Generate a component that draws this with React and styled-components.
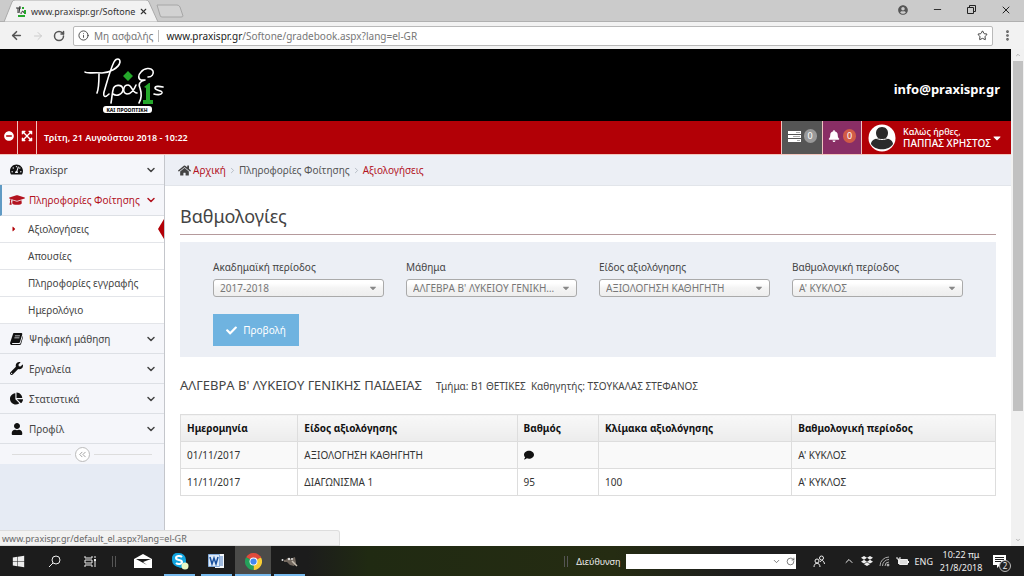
import React, { useState } from "react";
import styled, { createGlobalStyle, css } from "styled-components";
import {
  ArrowLeft,
  ArrowRight,
  ChevronDown,
  ChevronUp,
  ChevronsLeft,
  ChevronRight,
  EllipsisVertical,
  Info,
  Minus,
  RotateCw,
  Star,
  X,
} from "lucide-react";
import {
  FaBell,
  FaCaretDown,
  FaCaretRight,
  FaChartPie,
  FaCheck,
  FaComment,
  FaDropbox,
  FaExpandArrowsAlt,
  FaGraduationCap,
  FaHome,
  FaMinusCircle,
  FaTachometerAlt,
  FaUser,
  FaUserCircle,
  FaWindows,
  FaWrench,
} from "react-icons/fa";

const colors = {
  red: "#b20006",
  link: "#b3131f",
  panel: "#eceff5",
  line: "#dde0e5",
  text: "#444",
};

const GlobalStyle = createGlobalStyle`
  * {
    box-sizing: border-box;
  }
  body {
    margin: 0;
    background: #fff;
    color: ${colors.text};
    font-family: "Noto Sans", "Open Sans", sans-serif;
    font-size: 10px;
  }
  button, select, input {
    font-family: inherit;
  }
  a {
    color: inherit;
    text-decoration: none;
  }
  svg {
    display: block;
    flex: none;
  }
`;

const flexCenter = css`
  display: flex;
  align-items: center;
`;

const plainButton = css`
  ${flexCenter};
  justify-content: center;
  padding: 0;
  border: 0;
  background: none;
  color: inherit;
`;

const Screen = styled.div`
  display: flex;
  flex-direction: column;
  height: 100vh;
  overflow: hidden;
`;

/* browser window */

const TabStrip = styled.div`
  display: flex;
  flex: none;
  justify-content: space-between;
  height: 22px;
  background: #cbcbcb;
  border-bottom: 1px solid #b0b0b0;
`;

const TabList = styled.div`
  display: flex;
  padding-left: 4px;
`;

const Tab = styled.div`
  ${flexCenter};
  position: relative;
  z-index: 1;
  width: 155px;
  height: 22px;
  padding: 0 12px 0 11px;
  gap: 4px;
  color: #333;
  font-size: 9px;
`;

const TabShape = styled.svg`
  position: absolute;
  inset: 0;
  z-index: -1;
`;

const TabTitle = styled.span`
  flex: 1;
  white-space: nowrap;
`;

const IconButton = styled.button`
  ${plainButton};
`;

const WindowButtons = styled.div`
  ${flexCenter};
  gap: 24px;
  padding: 0 12px 2px 0;
  color: #222;
`;

const Toolbar = styled.div`
  ${flexCenter};
  flex: none;
  gap: 9px;
  height: 27px;
  padding: 0 10px;
  background: #f2f2f2;
  color: #555;
`;

const AddressBar = styled.div`
  ${flexCenter};
  flex: 1;
  height: 20px;
  margin: 0 -1px;
  padding: 0 4px;
  gap: 5px;
  border: 1px solid #b9b9b9;
  border-radius: 2px;
  background: #fff;
  color: #777;
  font-size: 10px;
`;

const Url = styled.span`
  flex: 1;
  padding-left: 7px;
  border-left: 1px solid #bbb;
  line-height: 12px;

  b {
    color: #222;
    font-weight: 400;
  }
`;

const Viewport = styled.div`
  display: flex;
  flex: 1;
  min-height: 0;
  position: relative;
`;

const Page = styled.div`
  display: flex;
  flex: 1;
  flex-direction: column;
  min-width: 0;
`;

const ScrollTrack = styled.div`
  display: flex;
  flex-direction: column;
  align-items: center;
  width: 13px;
  padding: 3px 1px;
  gap: 3px;
  background: #f1f1f1;
  color: #777;
`;

const ScrollThumb = styled.div`
  width: 10px;
  height: 350px;
  background: #c1c1c1;
`;

const ScrollSpace = styled.div`
  flex: 1;
`;

const StatusBubble = styled.div`
  position: absolute;
  bottom: 0;
  left: 0;
  width: 340px;
  height: 16px;
  padding-left: 2px;
  border: 1px solid #ddd;
  border-left: 0;
  border-radius: 0 3px 0 0;
  background: #f2f2f2;
  color: #666;
  font-size: 9px;
  line-height: 15px;
`;

/* site header */

const Header = styled.header`
  ${flexCenter};
  flex: none;
  justify-content: space-between;
  height: 72px;
  padding: 0 11px 0 84px;
  background: #000;
`;

const Email = styled.a`
  padding-top: 8px;
  color: #fff;
  font-size: 13px;
  font-weight: 700;
`;

const RedBar = styled.div`
  display: flex;
  flex: none;
  height: 34px;
  border-bottom: 1px solid #f3c6bd;
  background: ${colors.red};
  color: #fff;
`;

const BarButton = styled.button`
  ${plainButton};
  width: ${(props) => props.$width}px;
  gap: 3px;
  padding-bottom: 3px;
  border-right: 1px solid #f0c4c0;
  background: ${(props) => props.$bg || "none"};
`;

const BarDate = styled.div`
  flex: 1;
  padding-left: 7px;
  border-right: 1px solid #f0c4c0;
  font-size: 9px;
  font-weight: 600;
  line-height: 33px;
`;

const Count = styled.span`
  min-width: 13px;
  height: 14px;
  border-radius: 7px;
  background: ${(props) => props.$bg};
  font-size: 9px;
  line-height: 14px;
`;

const UserButton = styled.button`
  ${plainButton};
  justify-content: flex-start;
  width: 149px;
  padding-left: 6px;
  text-align: left;
`;

const UserName = styled.span`
  padding-left: 7px;
  font-size: 10px;
  font-weight: 500;
  line-height: 12px;
  white-space: nowrap;

  small {
    display: block;
    font-size: 9px;
    line-height: 11px;
  }
`;

/* sidebar */

const Body = styled.div`
  display: flex;
  flex: 1;
  min-height: 0;
`;

const Sidebar = styled.nav`
  flex: none;
  width: 165px;
  border-right: 1px solid #c4c6cb;
  background: #e6ebf4;
`;

const MenuIcon = styled.span`
  display: flex;
  justify-content: center;
  width: 17px;
  color: ${(props) => (props.$open ? colors.link : "#111")};
`;

const MenuLabel = styled.span`
  flex: 1;
`;

const MenuLink = styled.a`
  ${flexCenter};
  height: 30px;
  padding: 0 7px 0 8px;
  gap: 4px;
  border-bottom: 1px solid ${colors.line};
  background: #f5f6fa;
  color: #444;
  white-space: nowrap;

  ${(props) =>
    props.$open &&
    css`
      height: 31px;
      padding-left: 6px;
      border-left: 2px solid #5f9ac4;
      color: ${colors.link};
    `};
`;

const SubLink = styled.a`
  ${flexCenter};
  position: relative;
  height: 27px;
  padding-left: 28px;
  border-bottom: 1px solid #e3e5e9;
  background: #fff;
  color: #444;

  ${(props) =>
    props.$active &&
    css`
      padding-left: 12px;
      gap: 12px;

      > svg {
        width: 4px;
        color: ${colors.red};
      }

      &::after {
        content: "";
        position: absolute;
        right: 0;
        border: solid transparent;
        border-width: 10px 6px 10px 0;
        border-right-color: ${colors.red};
      }
    `};
`;

const CollapseBar = styled.div`
  ${flexCenter};
  height: 20px;
  padding: 0 12px;
  background: #f5f6fa;

  &::before,
  &::after {
    content: "";
    flex: 1;
    border-top: 1px solid #ddd;
  }

  button {
    ${plainButton};
    width: 15px;
    height: 15px;
    margin: 0 4px;
    border: 1px solid #bbb;
    border-radius: 50%;
    background: #fff;
    color: #999;
  }
`;

/* content */

const Main = styled.main`
  flex: 1;
  min-width: 0;
`;

const Crumbs = styled.div`
  ${flexCenter};
  height: 31px;
  padding-left: 13px;
  gap: 2px;
  border-bottom: 1px solid #e2e5ea;
  background: ${colors.panel};
  color: #555;

  a {
    ${flexCenter};
    gap: 2px;
  }

  svg:not(a svg) {
    color: #a5acb5;
  }
`;

const CrumbLink = styled.a`
  color: ${colors.link};

  svg {
    color: #444;
  }
`;

const Content = styled.div`
  padding: 18px 15px 0;
`;

const Title = styled.h1`
  margin: 0;
  padding-bottom: 5px;
  border-bottom: 1px solid #b59a9c;
  color: #444;
  font-size: 18px;
  font-weight: 400;
  line-height: 25px;
`;

const Filters = styled.form`
  display: grid;
  grid-template-columns: repeat(4, 1fr);
  gap: 17px 22px;
  margin-top: 7px;
  padding: 18px 33px 11px;
  background: ${colors.panel};
`;

const Field = styled.div`
  display: flex;
  flex-direction: column;
  position: relative;
  min-width: 0;
  gap: 4px;

  label {
    color: #444;
    font-size: 10px;
    line-height: 15px;
  }

  select {
    width: 100%;
    height: 18px;
    padding: 0 20px 0 6px;
    appearance: none;
    border: 1px solid #aaa;
    border-radius: 3px;
    background: linear-gradient(#fff 20%, #f4f4f4 50%, #eee 100%);
    color: #777;
    font-size: 10px;
    line-height: 16px;
    overflow: hidden;
    text-overflow: ellipsis;
    white-space: nowrap;
  }

  svg {
    position: absolute;
    right: 6px;
    bottom: 4px;
    color: #888;
    pointer-events: none;
  }
`;

const SubmitButton = styled.button`
  ${plainButton};
  width: 86px;
  height: 32px;
  gap: 6px;
  background: #6fb3e0;
  color: #fff;
  font-size: 10px;
`;

const Course = styled.h2`
  display: flex;
  align-items: baseline;
  gap: 14px;
  margin: 19px 0 19px;
  color: #444;
  font-size: 13px;
  font-weight: 400;
  line-height: 18px;
  white-space: nowrap;

  small {
    font-size: 10px;
  }
`;

const Table = styled.table`
  width: 100%;
  border-collapse: collapse;
  table-layout: fixed;
  color: #333;

  th,
  td {
    height: 27px;
    padding: 0 6px;
    border: 1px solid #ddd;
    text-align: left;
  }

  th {
    background: linear-gradient(#f8f8f8, #ececec);
    color: #111;
    font-weight: 700;
  }

  tbody tr:first-child {
    background: #f9f9f9;
  }
`;

/* taskbar */

const Taskbar = styled.footer`
  display: flex;
  flex: none;
  align-items: stretch;
  justify-content: space-between;
  height: 30px;
  background: linear-gradient(90deg, #1c1c1c 30%, #202a12 36%, #252c12 60%, #1d1d1d 72%);
  color: #eee;
`;

const TaskGroup = styled.div`
  ${flexCenter};
  gap: ${(props) => props.$gap || 0}px;
`;

const TaskButton = styled.button`
  ${plainButton};
  position: relative;
  width: ${(props) => props.$width || 37}px;
  height: 30px;
  background: ${(props) => (props.$active ? "#4b4b49" : "none")};

  ${(props) =>
    props.$running &&
    css`
      &::after {
        content: "";
        position: absolute;
        right: ${props.$active ? 0 : 3}px;
        bottom: 0;
        left: ${props.$active ? 0 : 3}px;
        height: 2px;
        background: #76b9ed;
      }
    `};
`;

const Grip = styled.div`
  width: 4px;
  height: 11px;
  margin: 0 8px 0 4px;
  border: solid #555;
  border-width: 0 1px;
`;

const AddressTool = styled.div`
  ${flexCenter};
  font-size: 9px;

  label {
    padding-right: 5px;
  }
`;

const AddressInput = styled.div`
  ${flexCenter};
  width: 170px;
  height: 15px;
  padding-right: 1px;
  gap: 5px;
  background: #fff;
  color: #555;

  input {
    flex: 1;
    min-width: 0;
    height: 15px;
    padding: 0 2px;
    border: 0;
    background: none;
    outline: none;
    font-size: 10px;
  }
`;

const Language = styled.span`
  font-size: 9px;
`;

const Clock = styled.div`
  width: 44px;
  font-size: 9px;
  line-height: 13px;
  text-align: center;
`;

const Notices = styled.div`
  position: relative;
  margin: 0 17px 0 4px;

  span {
    position: absolute;
    top: 5px;
    left: 6px;
    width: 12px;
    height: 12px;
    border: 1px solid #bbb;
    border-radius: 50%;
    background: #222;
    font-size: 8px;
    line-height: 10px;
    text-align: center;
  }
`;

const Logo = () => (
  <svg width="80" height="57" viewBox="0 0 80 57" aria-label="Πράξις">
    <g fill="none" stroke="#fff" strokeWidth="1.6" strokeLinecap="round" strokeLinejoin="round">
      <path d="M1 15c2 2 9 0 17 1 7 0 17-5 18-11 0-4-4-4-6 0-4 8-7 20-10 30-1 5 1 6 5 2" />
      <path d="M15 17c0 7 0 14-2 19" />
      <path d="M27 46c1-5 1-9 2-13 1-6 9-6 10-1 0 5-6 8-10 5" />
      <path d="M52 28c-2 5-5 9-9 9-5-1-4-9 1-9 4 0 4 8 9 8" />
      <path d="M64 20c4 0 6-3 5-6-2-4-9-3-12 1-3 3-3 7 0 8h4c-5 1-7 4-5 8 2 6 2 10-1 15" />
      <path d="M79 30c-4-1-8-1-8 1 0 3 8 2 7 5-1 2-5 2-8 1" />
    </g>
    <path fill="#25a82b" d="m44 14 5 5-5 5-5-5zM60 30l5-4h1v17h3v4h-10v-4h3V31z" />
    <rect x="19" y="49" width="49" height="7" rx="3" fill="#fff" />
    <text x="43" y="55" textAnchor="middle" fontSize="5" fontWeight="800" fill="#111">
      ΚΑΙ ΠΡΟΟΠΤΙΚΗ
    </text>
  </svg>
);

const Favicon = () => (
  <svg width="12" height="12" viewBox="0 0 12 12" fill="none" stroke="#333">
    <path d="M1 3h5M3 3v5M5 1 4 8M6 9c0-4 4-3 2-1" />
    <path stroke="#25a82b" strokeWidth="2" d="M8 2v2M10 5v4M3 11h7" />
  </svg>
);

const Avatar = () => (
  <svg width="28" height="28" viewBox="0 0 28 28">
    <circle cx="14" cy="14" r="13.500" fill="#fff" />
    <path
      fill="#2b2b2b"
      d="M14 3c4 0 6 3 6 6 0 2-1 4-2 5 4 1 7 3 7 6-4 7-18 7-22 0 0-3 3-5 7-6-1-1-2-3-2-5 0-3 2-6 6-6z"
    />
    <path fill="none" stroke="#fff" d="M8 14c3 2 9 2 12 0" />
  </svg>
);

const BookIcon = () => (
  <svg width="13" height="13" viewBox="0 0 13 13">
    <path
      fill="currentColor"
      fillRule="evenodd"
      d="M4 1h7c1 0 1.500.6 1.200 1.500L10 10c-.2.700-.8 1-1.500 1H2.500c-.7 0-.7 1 0 1H9.500c.5 0 .9-.3 1-.7L13 3.500c.2 1 .1 1.300 0 1.700l-2 7c-.3.600-.8.800-1.500.800H2c-1.500 0-2.200-1.200-1.800-2.500L3 2c.1-.6.400-1 1-1zM5 3.500 4.800 4.200h5L10 3.500zM4.500 5.500l-.2.700h5l.2-.7z"
    />
  </svg>
);

const TasksIcon = () => (
  <svg width="13" height="11" viewBox="0 0 13 11">
    <path fill="#fff" d="M0 0h13v3H0zM0 4h13v3H0zM0 8h13v3H0z" />
    <path stroke="#aaa" d="M8 1.500h4M5 5.500h7M9 9.500h3" />
  </svg>
);

const SearchIcon = () => (
  <svg width="13" height="13" viewBox="0 0 13 13" fill="none" stroke="#eee">
    <circle cx="8" cy="5" r="4" />
    <path d="M5 8 1 12" />
  </svg>
);

const TaskViewIcon = () => (
  <svg width="13" height="13" viewBox="0 0 13 13" fill="none" stroke="#eee">
    <path d="M1 1v2h7V1M1 12v-2h7v2M1 5h7v3H1zM11 1v2M11 6v6" />
    <path strokeWidth="2" d="M11 4v2" />
  </svg>
);

const MailIcon = () => (
  <svg width="18" height="14" viewBox="0 0 18 14">
    <path fill="#fff" d="M0 5l9-5 9 5v9H0z" />
    <path fill="#1c1c1c" d="M2 5h15L9 8l4 3z" />
  </svg>
);

const SkypeIcon = () => (
  <svg width="18" height="18" viewBox="0 0 18 18">
    <circle cx="6" cy="6" r="5" fill="#12a5e0" />
    <circle cx="10" cy="11" r="5" fill="#12a5e0" />
    <circle cx="8" cy="8" r="7" fill="#12a5e0" />
    <path d="M11 5C9 3 5 4 5 6c0 3 6 1 6 4 0 2-4 3-6 1" fill="none" stroke="#fff" strokeWidth="2" />
    <circle cx="14" cy="14" r="3.500" fill="#e9f6c4" />
  </svg>
);

const WordIcon = () => (
  <svg width="17" height="16" viewBox="0 0 17 16">
    <path fill="#f4f7fb" d="M7 1h9v14H7z" />
    <path stroke="#4c7cc0" d="M12 4h3M12 6h3M12 8h3M12 10h3M11 12h4" />
    <path fill="#dce9f8" stroke="#86aedd" d="M.5 1.500h11v12H.5z" />
    <path fill="none" stroke="#174f9e" strokeWidth="1.500" d="m2 4 2 7 2-6 2 6 2-7" />
  </svg>
);

const ChromeIcon = () => (
  <svg width="17" height="17" viewBox="0 0 18 18">
    <path fill="#de4a3c" d="M9 9 1.200 4.500A9 9 0 0 1 16.800 4.500z" />
    <path fill="#f8cd34" d="M9 9l7.800-4.500A9 9 0 0 1 9 18z" />
    <path fill="#25a05a" d="M9 9v9A9 9 0 0 1 1.200 4.500z" />
    <path fill="#de4a3c" d="M9 5h8l-.5-1.500L9 2z" />
    <circle cx="9" cy="9" r="4.200" fill="#fff" />
    <circle cx="9" cy="9" r="3.300" fill="#4387ee" />
  </svg>
);

const GimpIcon = () => (
  <svg width="17" height="12" viewBox="0 0 17 12">
    <path fill="#71675e" d="M3 5c2 0 3-1 3-2l3 1 5-2 1 6-2 3-4-1-3-3-3 0z" />
    <path stroke="#c6bdaf" strokeWidth="1.500" d="m11 6 5 5" />
    <circle cx="8" cy="4" r="1.200" fill="#ddd" />
    <circle cx="11" cy="4" r="1" fill="#ddd" />
    <circle cx="1.500" cy="5" r="1" fill="#ddd" />
  </svg>
);

const PeopleIcon = () => (
  <svg width="12" height="13" viewBox="0 0 12 13" fill="none" stroke="#eee">
    <circle cx="4" cy="6" r="2" />
    <circle cx="8.500" cy="3" r="2" />
    <path d="M1 12c0-5 6-5 6 0M7 7c2-3 4-1 4.500 2" />
  </svg>
);

const WifiIcon = () => (
  <svg width="11" height="11" viewBox="0 0 11 11" fill="none" stroke="#aaa">
    <path d="M1 10a9 9 0 0 1 9-9M3.500 10A6.500 6.500 0 0 1 10 3.500M6 10a4 4 0 0 1 4-4" />
    <circle cx="9" cy="9" r="1" fill="#eee" />
  </svg>
);

const BatteryIcon = () => (
  <svg width="13" height="10" viewBox="0 0 13 10">
    <path fill="none" stroke="#eee" d="M3.500 3.500h8v5h-8zM12.500 5v2M1 1v2h3V1M2.500 3v5" />
    <path fill="#ddd" d="M4 4h7v4H4z" />
  </svg>
);

const NoticeIcon = () => (
  <svg width="14" height="13" viewBox="0 0 14 13">
    <path fill="#fff" d="M0 0h13v10H7l-3 3v-3H0z" />
    <path stroke="#222" d="M2 2.500h9M2 4.500h9M2 6.500h6" />
  </svg>
);

const menu = [
  { label: "Praxispr", icon: FaTachometerAlt },
  {
    label: "Πληροφορίες Φοίτησης",
    icon: FaGraduationCap,
    size: 16,
    children: ["Αξιολογήσεις", "Απουσίες", "Πληροφορίες εγγραφής", "Ημερολόγιο"],
  },
  { label: "Ψηφιακή μάθηση", icon: BookIcon },
  { label: "Εργαλεία", icon: FaWrench },
  { label: "Στατιστικά", icon: FaChartPie },
  { label: "Προφίλ", icon: FaUser, size: 12 },
];

const filters = [
  { id: "year", label: "Ακαδημαϊκή περίοδος", value: "2017-2018" },
  { id: "course", label: "Μάθημα", value: "ΑΛΓΕΒΡΑ Β' ΛΥΚΕΙΟΥ ΓΕΝΙΚΗΣ ΠΑΙΔΕΙΑΣ" },
  { id: "kind", label: "Είδος αξιολόγησης", value: "ΑΞΙΟΛΟΓΗΣΗ ΚΑΘΗΓΗΤΗ" },
  { id: "period", label: "Βαθμολογική περίοδος", value: "Α' ΚΥΚΛΟΣ" },
];

const columns = [
  { title: "Ημερομηνία", width: "14.4%" },
  { title: "Είδος αξιολόγησης", width: "26.9%" },
  { title: "Βαθμός", width: "10%" },
  { title: "Κλίμακα αξιολόγησης", width: "23.7%" },
  { title: "Βαθμολογική περίοδος", width: "25%" },
];

const grades = [
  ["01/11/2017", "ΑΞΙΟΛΟΓΗΣΗ ΚΑΘΗΓΗΤΗ", <FaComment size={10} color="#111" />, "", "Α' ΚΥΚΛΟΣ"],
  ["11/11/2017", "ΔΙΑΓΩΝΙΣΜΑ 1", "95", "100", "Α' ΚΥΚΛΟΣ"],
];

const BrowserChrome = () => (
  <>
    <TabStrip>
      <TabList>
        <Tab>
          <TabShape width="182" height="22" viewBox="0 0 182 22">
            <path d="M0 22 8 2q1-2 3-2h131q2 0 3 2l9 20z" fill="#f2f2f2" stroke="#aaa" />
            <path d="M153 5h20q2 0 3 2l3 9q0 1-2 1h-19q-2 0-2-2z" fill="#d2d2d2" stroke="#a6a6a6" />
          </TabShape>
          <Favicon />
          <TabTitle>www.praxispr.gr/Softone</TabTitle>
          <IconButton aria-label="Κλείσιμο καρτέλας">
            <X size={9} strokeWidth={3} />
          </IconButton>
        </Tab>
      </TabList>
      <WindowButtons>
        <FaUserCircle size={10} color="#555" />
        <IconButton aria-label="Ελαχιστοποίηση">
          <Minus size={11} strokeWidth={2} />
        </IconButton>
        <IconButton aria-label="Επαναφορά">
          <svg width="9" height="9" viewBox="0 0 9 9" fill="none" stroke="#222">
            <path d="M.5 2.500h6v6h-6zM2.500 2.500v-2h6v6h-2" />
          </svg>
        </IconButton>
        <IconButton aria-label="Κλείσιμο">
          <X size={12} strokeWidth={2} />
        </IconButton>
      </WindowButtons>
    </TabStrip>
    <Toolbar>
      <IconButton aria-label="Πίσω">
        <ArrowLeft size={13} strokeWidth={3} />
      </IconButton>
      <IconButton aria-label="Εμπρός">
        <ArrowRight size={12} color="#ccc" />
      </IconButton>
      <IconButton aria-label="Ανανέωση">
        <RotateCw size={12} strokeWidth={3} />
      </IconButton>
      <AddressBar>
        <Info size={11} color="#444" />
        <span>Μη ασφαλής</span>
        <Url>
          <b>www.praxispr.gr</b>/Softone/gradebook.aspx?lang=el-GR
        </Url>
        <Star size={11} color="#333" />
      </AddressBar>
      <EllipsisVertical size={13} strokeWidth={3} />
    </Toolbar>
  </>
);

const SiteHeader = () => (
  <>
    <Header>
      <Logo />
      <Email href="mailto:info@praxispr.gr">info@praxispr.gr</Email>
    </Header>
    <RedBar>
      <BarButton $width={18} aria-label="Μενού">
        <FaMinusCircle size={10} />
      </BarButton>
      <BarButton $width={19} aria-label="Πλήρης οθόνη">
        <FaExpandArrowsAlt size={12} />
      </BarButton>
      <BarDate>Τρίτη, 21 Αυγούστου 2018 - 10:22</BarDate>
      <BarButton $width={41} $bg="#555">
        <TasksIcon />
        <Count $bg="#999">0</Count>
      </BarButton>
      <BarButton $width={39} $bg="#892e65">
        <FaBell size={12} />
        <Count $bg="#d15b47">0</Count>
      </BarButton>
      <UserButton>
        <Avatar />
        <UserName>
          <small>Καλώς ήρθες,</small>
          ΠΑΠΠΑΣ ΧΡΗΣΤΟΣ
        </UserName>
        <FaCaretDown size={12} />
      </UserButton>
    </RedBar>
  </>
);

const SideMenu = () => (
  <Sidebar>
    {menu.map(({ label, icon: Icon, size = 13, children }) => (
      <React.Fragment key={label}>
        <MenuLink href="#" $open={!!children}>
          <MenuIcon $open={!!children}>
            <Icon size={size} />
          </MenuIcon>
          <MenuLabel>{label}</MenuLabel>
          <ChevronDown size={12} strokeWidth={3} />
        </MenuLink>
        {children &&
          children.map((child, index) => (
            <SubLink href="#" key={child} $active={index === 0}>
              {index === 0 && <FaCaretRight size={8} />}
              {child}
            </SubLink>
          ))}
      </React.Fragment>
    ))}
    <CollapseBar>
      <button aria-label="Σύμπτυξη">
        <ChevronsLeft size={11} />
      </button>
    </CollapseBar>
  </Sidebar>
);

const FilterField = ({ id, label, value }) => (
  <Field>
    <label htmlFor={id}>{label}</label>
    <select id={id} defaultValue={value}>
      <option>{value}</option>
    </select>
    <FaCaretDown size={10} />
  </Field>
);

const GradeTable = () => (
  <Table>
    <thead>
      <tr>
        {columns.map((column) => (
          <th key={column.title} style={{ width: column.width }}>
            {column.title}
          </th>
        ))}
      </tr>
    </thead>
    <tbody>
      {grades.map((row) => (
        <tr key={row[0]}>
          {row.map((cell, index) => (
            <td key={index}>{cell}</td>
          ))}
        </tr>
      ))}
    </tbody>
  </Table>
);

const SystemTaskbar = () => {
  const [address, setAddress] = useState("");

  return (
    <Taskbar>
      <TaskGroup>
        <TaskButton $width={36} aria-label="Έναρξη">
          <FaWindows size={13} />
        </TaskButton>
        <TaskButton $width={36} aria-label="Αναζήτηση">
          <SearchIcon />
        </TaskButton>
        <TaskButton $width={36} aria-label="Προβολή εργασιών">
          <TaskViewIcon />
        </TaskButton>
        <Grip />
        <TaskButton aria-label="Αλληλογραφία">
          <MailIcon />
        </TaskButton>
        <TaskButton aria-label="Skype" $running>
          <SkypeIcon />
        </TaskButton>
        <TaskButton aria-label="Word" $running>
          <WordIcon />
        </TaskButton>
        <TaskButton aria-label="Chrome" $width={36} $running $active>
          <ChromeIcon />
        </TaskButton>
        <TaskButton aria-label="GIMP" $running>
          <GimpIcon />
        </TaskButton>
      </TaskGroup>
      <TaskGroup $gap={6}>
        <AddressTool>
          <Grip />
          <label htmlFor="address">Διεύθυνση</label>
          <AddressInput>
            <input
              id="address"
              value={address}
              onChange={(e) => setAddress(e.target.value)}
            />
            <ChevronDown size={9} />
            <RotateCw size={9} />
          </AddressInput>
        </AddressTool>
        <TaskButton $width={35} aria-label="Άτομα">
          <PeopleIcon />
        </TaskButton>
        <ChevronUp size={12} />
        <FaDropbox size={12} />
        <WifiIcon />
        <BatteryIcon />
        <Language>ENG</Language>
        <Clock>
          10:22 πμ
          <br />
          21/8/2018
        </Clock>
        <Notices>
          <NoticeIcon />
          <span>2</span>
        </Notices>
      </TaskGroup>
    </Taskbar>
  );
};

const App = () => {
  return (
    <Screen>
      <GlobalStyle />
      <BrowserChrome />
      <Viewport>
        <Page>
          <SiteHeader />
          <Body>
            <SideMenu />
            <Main>
              <Crumbs>
                <CrumbLink href="#">
                  <FaHome size={13} />
                  Αρχική
                </CrumbLink>
                <ChevronRight size={9} />
                <a href="#">Πληροφορίες Φοίτησης</a>
                <ChevronRight size={9} />
                <CrumbLink href="#">Αξιολογήσεις</CrumbLink>
              </Crumbs>
              <Content>
                <Title>Βαθμολογίες</Title>
                <Filters onSubmit={(e) => e.preventDefault()}>
                  {filters.map((filter) => (
                    <FilterField key={filter.id} {...filter} />
                  ))}
                  <SubmitButton>
                    <FaCheck size={11} />
                    Προβολή
                  </SubmitButton>
                </Filters>
                <Course>
                  ΑΛΓΕΒΡΑ Β' ΛΥΚΕΙΟΥ ΓΕΝΙΚΗΣ ΠΑΙΔΕΙΑΣ
                  <small>Τμήμα: Β1 ΘΕΤΙΚΕΣ &nbsp;Καθηγητής: ΤΣΟΥΚΑΛΑΣ ΣΤΕΦΑΝΟΣ</small>
                </Course>
                <GradeTable />
              </Content>
            </Main>
          </Body>
        </Page>
        <ScrollTrack>
          <ChevronUp size={6} />
          <ScrollThumb />
          <ScrollSpace />
          <ChevronDown size={6} />
        </ScrollTrack>
        <StatusBubble>www.praxispr.gr/default_el.aspx?lang=el-GR</StatusBubble>
      </Viewport>
      <SystemTaskbar />
    </Screen>
  );
};

export default App;
